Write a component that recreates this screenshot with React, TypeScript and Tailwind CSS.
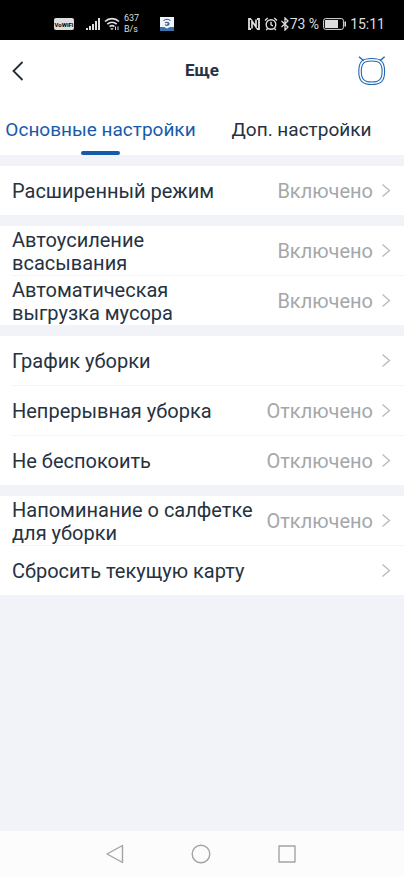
import { useState } from "react";
import type { ReactNode } from "react";

type Item = { label: string; value?: string };

const groups: Item[][] = [
  [{ label: "Расширенный режим", value: "Включено" }],
  [
    { label: "Автоусиление всасывания", value: "Включено" },
    { label: "Автоматическая выгрузка мусора", value: "Включено" },
  ],
  [
    { label: "График уборки" },
    { label: "Непрерывная уборка", value: "Отключено" },
    { label: "Не беспокоить", value: "Отключено" },
  ],
  [
    { label: "Напоминание о салфетке для уборки", value: "Отключено" },
    { label: "Сбросить текущую карту" },
  ],
];

const tabs = ["Основные настройки", "Доп. настройки"];

const StatusBar = () => (
  <div className="flex h-10 items-center justify-between bg-black pt-2 pr-[19px] pl-[54px] text-[#dedede]">
    <div className="flex items-center">
      <span className="flex h-3 w-5 items-center justify-center rounded-xs bg-[#dedede] text-[6px] font-bold text-black">
        VoWiFi
      </span>
      <svg className="ml-3 h-3 w-[14px]" viewBox="0 0 14 12" fill="currentColor">
        <path d="M0 10h2v2H0zM3 8h2v4H3zM6 6h2v6H6zM9 3h2v9H9zM12 0h2v12h-2z" />
      </svg>
      <svg
        className="ml-1 h-[14px] w-4"
        viewBox="0 0 16 14"
        fill="none"
        stroke="currentColor"
        strokeWidth="1.7"
      >
        <path d="M1 4.5C5 .6 11 .6 15 4.5M3.3 7.2c2.8-2.6 6.6-2.6 9.4 0M5.6 9.6c1.5-1.3 3.3-1.3 4.8 0" />
        <path d="M6.2 11.2h3.4L8 13.2z" fill="currentColor" stroke="none" />
        <path d="M11.5 9.5V13M14 9.5V13" strokeWidth="1" />
      </svg>
      <span className="ml-1 w-9 text-[9px] leading-[11px]">
        637
        <br />
        B/s
      </span>
      <svg className="h-[14px] w-[14px]" viewBox="0 0 14 14">
        <path d="M0 0h14v14H0z" fill="#f1f5fb" />
        <path d="M0 10h4l3 1.5 3-1.5h4v4H0z" fill="#3c70aa" />
        <path
          d="M3.5 3.7c2-1.7 5-1.7 7 0M5 6c1-1.2 4-1 4 .7S6 9 5 7.5M7 7h2"
          fill="none"
          stroke="#28568c"
          strokeWidth="1.1"
        />
      </svg>
    </div>
    <div className="flex items-center text-sm">
      <svg className="h-3 w-3" viewBox="0 0 12 12" fill="none" stroke="currentColor">
        <path d="M3 1H1v10h2M9 1h2v10H9" strokeWidth="1.8" />
        <path d="M4 10.500V3l4 6V1.500" strokeWidth="1.7" />
      </svg>
      <svg
        className="ml-1 h-[14px] w-[14px]"
        viewBox="0 0 14 14"
        fill="none"
        stroke="currentColor"
        strokeWidth="1.4"
      >
        <circle cx="7" cy="7.5" r="4.8" />
        <path d="M1 3.5 3.7 1M13 3.5 10.3 1M7 4.8v3l2 1M3.7 11.3l-1.500 1.8M10.3 11.3l1.500 1.8" />
      </svg>
      <svg
        className="ml-0.5 h-[14px] w-[10px]"
        viewBox="0 0 10 14"
        fill="none"
        stroke="currentColor"
        strokeWidth="1.3"
      >
        <path d="M1.500 4 8 10l-3 3V1l3 3-6.500 6" />
      </svg>
      <span>73 %</span>
      <svg className="ml-1 h-3 w-[23px]" viewBox="0 0 23 12">
        <rect x=".6" y=".6" width="19.8" height="10.8" rx="2" fill="none" stroke="currentColor" />
        <path d="M2 2h13v8H2z" fill="currentColor" />
        <path d="M21.5 3.5H23v5h-1.5z" fill="currentColor" />
      </svg>
      <span className="ml-1">15:11</span>
    </div>
  </div>
);

const Header = () => (
  <header className="grid h-[62px] grid-cols-3 items-center px-3">
    <button type="button" aria-label="Назад" className="w-5">
      <svg
        className="h-5 w-3"
        viewBox="0 0 12 20"
        fill="none"
        stroke="#202b38"
        strokeWidth="1.8"
      >
        <path d="M10.5 1 1.5 10l9 9" />
      </svg>
    </button>
    <h1 className="text-center text-[17px] font-bold">Еще</h1>
    <button type="button" aria-label="Устройство" className="mr-1.5 justify-self-end">
      <svg
        className="h-[30px] w-7"
        viewBox="0 0 28 30"
        fill="none"
        stroke="#2468b4"
        strokeWidth="1.1"
      >
        <path d="M13.7 2.5C4.500 2.500.8 5 .8 15.500c0 9.500 3.600 13 12.900 13s12.900-3.500 12.900-13C26.600 5 22.900 2.500 13.700 2.500z" />
        <path d="M13.7 5C6.200 5 3.300 7.200 3.300 15.500c0 7.600 2.800 10.500 10.400 10.500s10.400-2.900 10.400-10.500C24.100 7.200 21.200 5 13.700 5z" />
        <path d="M1 .8 5.700 4.800M26.600.8 21.900 4.800" strokeWidth="1.5" />
      </svg>
    </button>
  </header>
);

const SettingRow = ({ label, value }: Item) => (
  <button
    type="button"
    className="flex h-[49px] w-full items-center justify-between pr-[13px] text-left text-xl leading-[23px]"
  >
    <span className="max-w-62 pt-0.5">{label}</span>
    <span className="flex items-center gap-2">
      <span className="pt-0.5 text-[#a5a7aa]">{value}</span>
      <svg
        className="h-4 w-[10px]"
        viewBox="0 0 10 16"
        fill="none"
        stroke="#b9bbbf"
        strokeWidth="1.4"
      >
        <path d="m1.5 1.500 7 6-7 6" />
      </svg>
    </span>
  </button>
);

const NavButton = ({ label, children }: { label: string; children: ReactNode }) => (
  <button type="button" aria-label={label}>
    <svg
      className="h-5 w-5"
      viewBox="0 0 20 20"
      fill="none"
      stroke="#a3a3a3"
      strokeWidth="1.4"
      strokeLinejoin="round"
    >
      {children}
    </svg>
  </button>
);

const App = () => {
  const [active, setActive] = useState(0);

  return (
    <div className="flex min-h-screen flex-col bg-[#f2f3f8] font-[Roboto,sans-serif] text-[#26323f]">
      <StatusBar />
      <div className="bg-white">
        <Header />
        <div role="tablist" className="grid h-[53px] grid-cols-2 pr-0.5">
          {tabs.map((tab, i) => (
            <button
              key={tab}
              type="button"
              role="tab"
              aria-selected={active === i}
              onClick={() => setActive(i)}
              className={`flex flex-col items-center justify-between pt-4 text-[19px] leading-[23px] whitespace-nowrap ${
                active === i ? "text-[#165baa]" : ""
              }`}
            >
              {tab}
              {active === i && <span className="h-1 w-[39px] rounded-full bg-[#165baa]" />}
            </button>
          ))}
        </div>
      </div>

      <main className="flex flex-1 flex-col gap-[11px] py-[11px]">
        {groups.map((items) => (
          <ul key={items[0].label} className="bg-white pl-3">
            {items.map((item, i) => (
              <li key={item.label} className={i > 0 ? "border-t border-[#f3f4f6]" : ""}>
                <SettingRow {...item} />
              </li>
            ))}
          </ul>
        ))}
      </main>

      <nav className="flex h-[46px] items-center justify-center gap-[66px] bg-[#fcfcfc] pr-0.5">
        <NavButton label="Назад">
          <path d="M17.5 1.5v17L2 10z" />
        </NavButton>
        <NavButton label="Домой">
          <circle cx="10" cy="10" r="8.8" />
        </NavButton>
        <NavButton label="Недавние">
          <rect x="2" y="2" width="16" height="16" />
        </NavButton>
      </nav>
    </div>
  );
};

export default App;
